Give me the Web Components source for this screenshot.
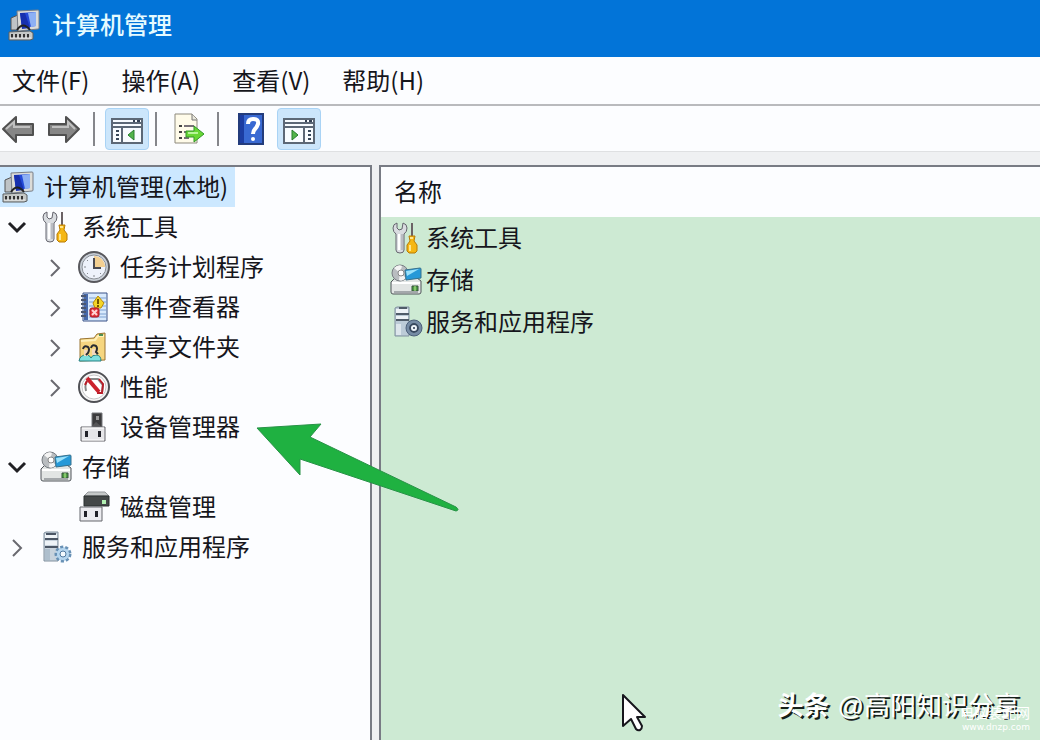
<!DOCTYPE html>
<html lang="zh-CN">
<head>
<meta charset="utf-8">
<title>计算机管理</title>
<style>
  html, body {
    margin: 0;
    height: 100%;
  }
  body {
    font: 24px/40px "Noto Sans CJK SC", sans-serif;
    color: #16161c;
    overflow: hidden;
  }
</style>
</head>
<body>
<mmc-window>
  <mmc-titlebar slot="title">计算机管理</mmc-titlebar>
  <mmc-menubar slot="menu"></mmc-menubar>
  <mmc-toolbar slot="toolbar"></mmc-toolbar>
  <mmc-tree slot="tree"></mmc-tree>
  <mmc-list slot="list" heading="名称"></mmc-list>
  <mmc-marks slot="over"></mmc-marks>
</mmc-window>

<script>
const ICONS = {
  computer: `
    <path d="M3 9l7-3v15H3z" fill="#bfc3c6" stroke="#555" />
    <path d="M9 2l21-1q1 0 1 1v17q0 1-1 1l-19 2q-1 0-1-1z" fill="#dcdcd8" stroke="#777d86" />
    <path d="M12 4l16-1v14l-14 2z" fill="#2449d8" />
    <path d="M20 4l8-1v14l-5 1z" fill="#8db0f4" />
    <path d="M12 4h5l5 15-8 1z" fill="#1730ae" />
    <path d="M9 21q6-9 13 0" fill="none" stroke="#222" stroke-width="2" />
    <path d="M1 23l21-1 3 2v6l-3 1H1z" fill="#c5c8c6" stroke="#5a5e60" />
    <path d="M4 25v4M8 25v4M12 25v4M16 25v4M20 25v4" stroke="#333" stroke-width="2" />
    <path d="M2 29h21" stroke="#eee" />`,
  tools: `
    <path d="M7 1Q3 2 3 6q0 4 3 6v16q0 3 4 3t4-3V12q3-2 3-6 0-4-4-5l-1 6-3 1-2-2z" fill="#d9dce0" stroke="#65656e" />
    <path d="M9 12v16" stroke="#fff" stroke-width="2" />
    <path d="M12 12v16" stroke="#9c9ea6" />
    <path d="M22 1v14" stroke="#6b6265" stroke-width="2" />
    <path d="M19 14h6l-1 5 3 4v6l-2 2h-6l-2-2v-6l3-4z" fill="#f5b714" stroke="#b87b05" />
    <path d="M20 16h3M20 23v6" stroke="#ffe58b" stroke-width="2" />`,
  clock: `
    <circle cx="16" cy="16" r="15" fill="#c8ced6" stroke="#58585d" stroke-width="2" />
    <circle cx="16" cy="16" r="12" fill="#eef2fb" stroke="#8b9097" />
    <path d="M16 16V5a11 11 0 0 1 11 11z" fill="#f3cf91" />
    <path d="M16 7v10h7" fill="none" stroke="#4a4a52" stroke-width="2" />
    <path d="M16 24v2M6 16h2M9 9l1 1M9 23l1-1M23 23l-1-1" stroke="#85898e" />`,
  events: `
    <path d="M5 2h24v28H5z" fill="#d8e9fc" stroke="#3b5288" />
    <path d="M6 3h4v26H6z" fill="#4769aa" />
    <path d="M11 7h17M11 11h17M11 15h17M11 19h17M11 23h17M11 26h17" stroke="#7ca1d1" />
    <path d="M3 5h5M3 9h5M3 13h5M3 17h5M3 21h5M3 25h5" stroke="#4b5770" stroke-width="2" />
    <path d="M20 5l6 7-3 5h-6l-2-5z" fill="#f4d528" stroke="#b88a0a" />
    <path d="M20 8v5M20 14v2" stroke="#735500" stroke-width="2" />
    <rect x="12" y="17" width="9" height="9" rx="2" fill="#df343b" stroke="#ad1721" />
    <path d="M14 19l5 5M19 19l-5 5" stroke="#ffd3d3" stroke-width="2" />`,
  share: `
    <path d="M2 8l14-1 3-4 8-1v27l-25 1z" fill="#f6d680" stroke="#9a7432" />
    <path d="M3 10l14-1 3-4h6" fill="none" stroke="#fff0b8" stroke-width="2" />
    <path d="M21 4h4" stroke="#4d8f54" stroke-width="2" />
    <path d="M1 30q1-6 7-6 4 0 5 3 1-3 5-3 5 0 5 6z" fill="#7de0df" stroke="#268183" />
    <path d="M6 19h4v6H6zM14 18h4v6h-4z" fill="#f3d8bd" />
    <path d="M5 18q1-4 5-2 2 2 0 6l-2 2M13 17q1-4 5-2 2 2 0 6l2 2" fill="none" stroke="#292c31" stroke-width="2" />`,
  performance: `
    <circle cx="16" cy="16" r="15" fill="#f5f5f5" stroke="#4f5055" stroke-width="2" />
    <circle cx="16" cy="16" r="12" fill="#fff" stroke="#c7c7c9" />
    <path d="M8 20q-2-9 3-12h9l5 6-1 8" fill="none" stroke="#888" stroke-width="2" />
    <path d="M7 14l2-4M21 8l4 5-1 9h-5" fill="none" stroke="#b81e29" stroke-width="2" />
    <path d="M9 7l12 14" stroke="#cb222d" stroke-width="4" />`,
  device: `
    <path d="M14 2h10v14H14z" fill="#3b3b3d" stroke="#77797c" />
    <path d="M18 5h3v4h-3z" fill="#9a9a9b" />
    <path d="M14 15l4-4 6 5" fill="#565658" />
    <path d="M3 16h24v14H3z" fill="#e6e6e9" stroke="#66676d" />
    <path d="M4 17h22M4 29h22" stroke="#fff" />
    <path d="M7 20h3v6H7zM20 20h3v6h-3z" fill="#22232a" />`,
  storage: `
    <path d="M2 17l3-3h22l4 3v11q0 2-2 2H3q-2 0-2-2V18z" fill="#e2e5e4" stroke="#50555a" />
    <path d="M2 19h28" stroke="#fff" stroke-width="2" />
    <circle cx="10" cy="9" r="8" fill="#b9bdc0" stroke="#777c82" />
    <path d="M10 9L4 4q4-4 8-2zM10 9l6 5q-4 4-7 2z" fill="#f4f4f4" />
    <circle cx="11" cy="9" r="3" fill="#fff" stroke="#888" />
    <path d="M15 6l15-2q1 0 1 1v9l-15 2z" fill="#2699d8" stroke="#37718d" />
    <path d="M16 7l13-2-12 7z" fill="#9ce2fa" />
    <path d="M22 22h6v5h-6z" fill="#4f9d45" stroke="#34523b" />
    <path d="M25 22v5" stroke="#bff294" />
    <path d="M4 28h24" stroke="#a4a8ab" stroke-width="2" />`,
  disk: `
    <path d="M6 5l4-4h17l4 4z" fill="#c5c8c8" stroke="#96999c" />
    <path d="M6 5h25v10H6z" fill="#444848" stroke="#2b3031" />
    <path d="M24 9h4v4h-4z" fill="#b2f0b2" />
    <path d="M2 16h22v14H2z" fill="#ececf0" stroke="#65676c" />
    <path d="M6 20h3v6H6zM17 20h3v6h-3z" fill="#202128" />`,
  services: `
    <path d="M4 2l2-1h12v29H4z" fill="#c8d3dd" stroke="#80909e" />
    <path d="M5 3h12v4H5zM5 10h12v4H5z" fill="#eef3f7" />
    <path d="M6 3h10M5 8h13M5 16h13" stroke="#4b5665" stroke-width="2" />
    <path d="M5 18h5v11H5z" fill="#aebfcd" />
    <circle cx="23" cy="23" r="7" fill="#b6d6ef" stroke="#6891b5" stroke-width="3" stroke-dasharray="3 2" />
    <circle cx="23" cy="23" r="6" fill="#b6d6ef" />
    <circle cx="23" cy="23" r="3" fill="#f4faff" stroke="#51799f" />`,
  servicesDisc: `
    <path d="M5 2l2-1h12v29H5z" fill="#bccbd7" stroke="#80909e" />
    <path d="M6 3h12v4H6zM6 10h12v4H6z" fill="#eef3f7" />
    <path d="M9 2h8M6 8h13M6 14h13" stroke="#505c69" stroke-width="2" />
    <path d="M6 18h5v11H6z" fill="#dde6ec" />
    <circle cx="24" cy="22" r="8" fill="#758ba4" stroke="#4c607a" />
    <circle cx="24" cy="22" r="5" fill="#a5bad0" />
    <circle cx="24" cy="22" r="4" fill="#eef4fa" stroke="#37485e" stroke-width="2" />
    <circle cx="24" cy="22" r="1" fill="#26364c" />`,
  back: `
    <path d="M1 16L14 4v7h17v11H14v7z" fill="#868686" stroke="#505050" stroke-width="2" stroke-linejoin="round" />
    <path d="M4 16l8-7v5h16" fill="none" stroke="#c0c0c0" stroke-width="2" />`,
  forward: `
    <path d="M31 16L18 4v7H1v11h17v7z" fill="#868686" stroke="#505050" stroke-width="2" stroke-linejoin="round" />
    <path d="M4 14h16V9l7 7" fill="none" stroke="#c0c0c0" stroke-width="2" />`,
  treePane: `
    <path d="M1 6h30v24H1z" fill="#f8fcff" stroke="#5c6876" stroke-width="2" />
    <path d="M1 10h30M1 14h30" stroke="#5c6876" stroke-width="2" />
    <path d="M22 8h2M26 8h3" stroke="#354153" stroke-width="2" />
    <path d="M11 14v16" stroke="#5c6876" stroke-width="2" />
    <path d="M5 18h3M5 22h3M5 26h3" stroke="#38485a" stroke-width="2" />
    <path d="M23 17v10l-6-5z" fill="#51b44a" stroke="#267d2e" />`,
  actionPane: `
    <path d="M1 6h30v24H1z" fill="#f8fcff" stroke="#5c6876" stroke-width="2" />
    <path d="M1 10h30M1 14h30" stroke="#5c6876" stroke-width="2" />
    <path d="M22 8h2M26 8h3" stroke="#354153" stroke-width="2" />
    <path d="M21 14v16" stroke="#5c6876" stroke-width="2" />
    <path d="M25 18h3M25 22h3M25 26h3" stroke="#38485a" stroke-width="2" />
    <path d="M9 17v10l6-5z" fill="#51b44a" stroke="#267d2e" />`,
  export: `
    <path d="M2 1h17l5 5v24H2z" fill="#fffbe9" stroke="#8d897d" />
    <path d="M19 1v6h5" fill="#e8e7dd" stroke="#777" />
    <path d="M6 13h3M6 19h3M6 25h3" stroke="#444" stroke-width="2" />
    <path d="M11 13h10M11 19h5M11 25h5" stroke="#776f76" stroke-width="2" />
    <path d="M13 18h8v-5l10 8-10 8v-5h-8z" fill="#69d735" stroke="#319729" />
    <path d="M15 20h10" stroke="#b7f69a" stroke-width="2" />`,
  help: `
    <path d="M4 1h24v30H4z" fill="#3969d2" stroke="#233c7c" stroke-width="2" />
    <path d="M5 2h4v28H5z" fill="#1c3da2" />
    <path d="M13 11q0-5 5-5 6 0 5 5-1 3-3 5-2 2-2 5" fill="none" stroke="#fff" stroke-width="4" />
    <circle cx="18" cy="26" r="2" fill="#fff" />`,
  open: `<path d="M9 12l8 8 8-8" fill="none" stroke="#202024" stroke-width="3" />`,
  closed: `<path d="M13 9l8 8-8 8" fill="none" stroke="#696970" stroke-width="2" />`
}

const icon = name => `<svg class="icon" viewBox="0 0 32 32" aria-hidden="true">${ICONS[name]}</svg>`

const BASE = `
  * { box-sizing: border-box; }
  button { font: inherit; color: inherit; background: none; border: 0; padding: 0; margin: 0; }
  .icon { display: block; flex: none; width: 32px; height: 32px; overflow: visible; }
  .label { display: block; padding-bottom: 2px; }
`

class MmcElement extends HTMLElement {
  connectedCallback() {
    if (this.shadowRoot) return
    const root = this.attachShadow({ mode: 'open' })
    root.innerHTML = `<style>${BASE}${this.css()}</style>${this.html()}`
  }
}

customElements.define('mmc-window', class extends MmcElement {
  css() {
    return `
      :host { display: flex; flex-direction: column; height: 100vh; position: relative; background: #eff0f2; }
      main { flex: 1; min-height: 0; display: grid; grid-template-columns: minmax(280px, 372px) minmax(0, 1fr); gap: 7px; padding-top: 13px; }
      section { border-top: 2px solid #787b84; background: #fcfdff; overflow: hidden; }
      .tree { border-right: 2px solid #787b84; }
      .list { border-left: 2px solid #787b84; background: #cdead3; }
    `
  }

  html() {
    return `
      <slot name="title"></slot>
      <slot name="menu"></slot>
      <slot name="toolbar"></slot>
      <main>
        <section class="tree"><slot name="tree"></slot></section>
        <section class="list"><slot name="list"></slot></section>
      </main>
      <slot name="over"></slot>
    `
  }
})

customElements.define('mmc-titlebar', class extends MmcElement {
  css() {
    return `
      :host { display: block; background: #0274d8; color: #e6fbff; }
      header { display: flex; align-items: center; gap: 12px; padding: 4px 8px 11px; }
      h1 { font: inherit; font-weight: 500; margin: 0; }
    `
  }

  html() {
    return `<header>${icon('computer')}<h1 class="label"><slot></slot></h1></header>`
  }
})

customElements.define('mmc-menubar', class extends MmcElement {
  css() {
    return `
      :host { display: block; background: #fcfdff; border-bottom: 2px solid #b9babd; }
      nav { display: flex; gap: 32px; padding: 3px 12px 2px; }
    `
  }

  html() {
    const items = ['文件(F)', '操作(A)', '查看(V)', '帮助(H)']
    return `<nav>${items.map(text => `<button type="button" class="label">${text}</button>`).join('')}</nav>`
  }
})

customElements.define('mmc-toolbar', class extends MmcElement {
  css() {
    return `
      :host { display: block; background: #fcfdff; border-bottom: 1px solid #dfe0e2; }
      div { display: flex; align-items: center; height: 45px; padding: 0 2px; }
      button { display: flex; align-items: center; justify-content: center; height: 42px; width: 44px; border-radius: 4px; }
      button.nav { width: 32px; margin-right: 14px; }
      button.on { background: #cce6fb; border: 1px solid #a9d3f5; }
      button.on + hr { margin-left: 6px; }
      button + button.on { margin-left: 4px; }
      hr { width: 2px; height: 34px; border: 0; background: #85868b; margin: 0 10px 0 6px; }
      button.nav + hr { margin-left: -1px; }
    `
  }

  html() {
    const button = (name, label, cls = '') =>
      `<button type="button" class="${cls}" aria-label="${label}">${icon(name)}</button>`
    return `
      <div>
        ${button('back', '后退', 'nav')}
        ${button('forward', '前进', 'nav')}
        <hr>
        ${button('treePane', '显示/隐藏控制台树', 'on')}
        <hr>
        ${button('export', '导出列表')}
        <hr>
        ${button('help', '帮助')}
        ${button('actionPane', '显示/隐藏操作窗格', 'on')}
      </div>
    `
  }
})

const TREE = [
  { text: '系统工具', icon: 'tools', state: 'open', children: [
    { text: '任务计划程序', icon: 'clock', state: 'closed' },
    { text: '事件查看器', icon: 'events', state: 'closed' },
    { text: '共享文件夹', icon: 'share', state: 'closed' },
    { text: '性能', icon: 'performance', state: 'closed' },
    { text: '设备管理器', icon: 'device' }
  ] },
  { text: '存储', icon: 'storage', state: 'open', children: [
    { text: '磁盘管理', icon: 'disk' }
  ] },
  { text: '服务和应用程序', icon: 'services', state: 'closed' }
]

customElements.define('mmc-tree', class extends MmcElement {
  css() {
    return `
      :host { display: block; white-space: nowrap; }
      ul { list-style: none; margin: 0; padding: 0; }
      ul ul { padding-left: 38px; }
      .row { display: flex; align-items: center; height: 40px; }
      .toggle { width: 32px; height: 32px; flex: none; margin-right: 8px; }
      .item { display: flex; align-items: center; gap: 10px; height: 40px; }
      .root { padding: 0 7px 0 2px; background: #cce8ff; }
    `
  }

  node(item) {
    const toggle = item.state
      ? `<button type="button" class="toggle" aria-label="${item.text}" aria-expanded="${item.state === 'open'}">${icon(item.state)}</button>`
      : '<span class="toggle"></span>'
    const children = item.children
      ? `<ul>${item.children.map(child => this.node(child)).join('')}</ul>`
      : ''
    return `
      <li>
        <div class="row">${toggle}<button type="button" class="item">${icon(item.icon)}<span class="label">${item.text}</span></button></div>
        ${children}
      </li>
    `
  }

  html() {
    return `
      <button type="button" class="item root">${icon('computer')}<span class="label">计算机管理(本地)</span></button>
      <ul>${TREE.map(item => this.node(item)).join('')}</ul>
    `
  }
})

customElements.define('mmc-list', class extends MmcElement {
  css() {
    return `
      :host { display: block; }
      table { width: 100%; border-collapse: collapse; }
      th { height: 50px; padding: 0 13px; background: #fcfdff; font-weight: 400; text-align: left; }
      td { height: 42px; padding: 0 9px; }
      td div { display: flex; align-items: center; gap: 4px; height: 40px; }
    `
  }

  html() {
    const rows = [['tools', '系统工具'], ['storage', '存储'], ['servicesDisc', '服务和应用程序']]
    return `
      <table>
        <thead><tr><th><span class="label">${this.getAttribute('heading')}</span></th></tr></thead>
        <tbody>
          ${rows.map(([name, text]) => `<tr><td><div>${icon(name)}<span class="label">${text}</span></div></td></tr>`).join('')}
        </tbody>
      </table>
    `
  }
})

// Everything that floats over the window: arrow, mouse pointer, watermarks
customElements.define('mmc-marks', class extends MmcElement {
  css() {
    return `
      :host { position: absolute; inset: 0; pointer-events: none; overflow: hidden; }
      svg { position: absolute; }
      .arrow { left: 256px; top: 422px; width: 204px; height: 92px; }
      .pointer { left: 620px; top: 692px; width: 28px; height: 42px; }
      p { position: absolute; margin: 0; color: #fff; white-space: nowrap; }
      .author { right: 20px; bottom: 14px; display: flex; gap: 8px; font-family: "Liberation Sans", "Noto Sans CJK SC", sans-serif; font-size: 26px; text-shadow: 2px 2px 0 #16201a; }
      .site { right: 10px; bottom: 6px; font-size: 14px; line-height: 16px; text-align: right; }
      .site small { display: block; font: 9px/14px "DejaVu Sans", sans-serif; }
    `
  }

  html() {
    return `
      <svg class="arrow" viewBox="0 0 204 92" aria-hidden="true">
        <path d="M1 6L65 2 54 15 200 85q4 3 0 4L44 37v16z" fill="#1fb141" stroke="#289247" />
      </svg>
      <svg class="pointer" viewBox="0 0 28 42" aria-hidden="true">
        <path d="M3 3v31l8-7 5 10q2 2 4 1t2-4l-5-9h8z" fill="#fff" stroke="#16161c" stroke-width="2" stroke-linejoin="round" />
      </svg>
      <p class="author"><b>头条</b><span>@高阳知识分享</span></p>
      <p class="site">电脑装配网<small>www.dnzp.com</small></p>
    `
  }
})
</script>
</body>
</html>
